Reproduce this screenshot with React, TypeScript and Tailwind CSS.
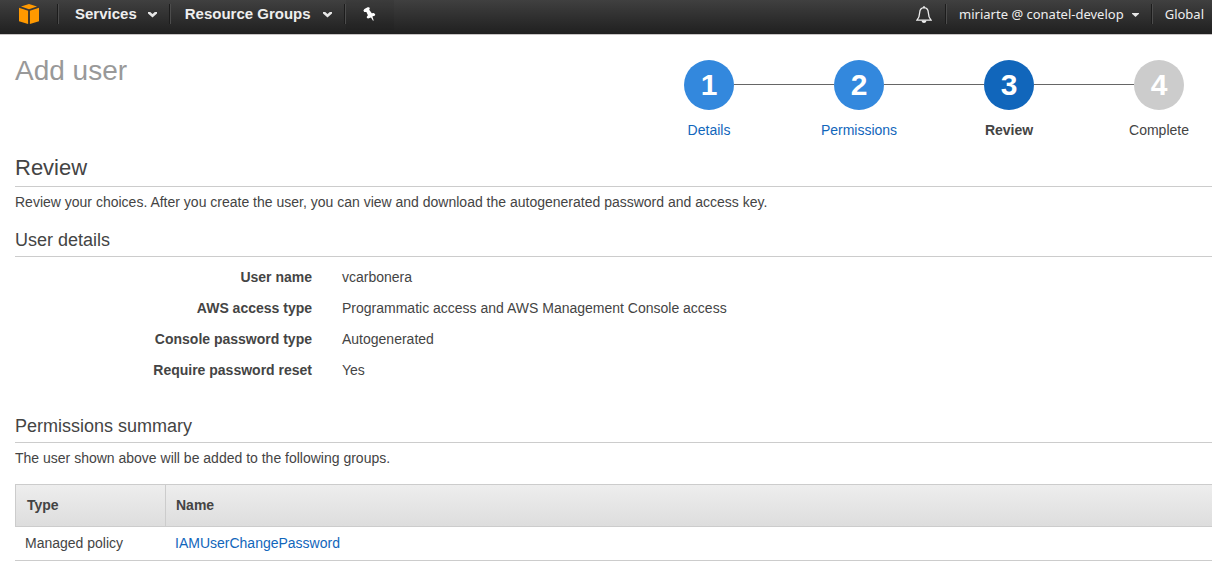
import React from "react";

type StepState = "done" | "current" | "upcoming";

const steps: { label: string; state: StepState }[] = [
  { label: "Details", state: "done" },
  { label: "Permissions", state: "done" },
  { label: "Review", state: "current" },
  { label: "Complete", state: "upcoming" },
];

const circleColor: Record<StepState, string> = {
  done: "bg-[#3388dd]",
  current: "bg-[#1166bb]",
  upcoming: "bg-[#cccccc]",
};

const details = [
  ["User name", "vcarbonera"],
  ["AWS access type", "Programmatic access and AWS Management Console access"],
  ["Console password type", "Autogenerated"],
  ["Require password reset", "Yes"],
];

const policies = [{ type: "Managed policy", name: "IAMUserChangePassword" }];

function Divider() {
  return <span className="mt-1 h-5 w-0.5 shrink-0 border-l border-r border-l-[#1c1c1c] border-r-[#4c4c4c]" />;
}

function CubeLogo() {
  return (
    <svg width="20" height="20" viewBox="0 0 20 20" fill="#ff9900" aria-hidden="true">
      <path d="M10 0 18 2.4 10 5.2 2 2.4Z" />
      <path d="M0 3.8 9.1 6.8V20L0 17.2Z" />
      <path d="M20 3.8 10.9 6.8V20L20 17.2Z" />
    </svg>
  );
}

function Chevron() {
  return (
    <svg width="9" height="6" viewBox="0 0 9 6" fill="#e6e6e6" aria-hidden="true">
      <path d="M0 0H2.2L4.5 2 6.8 0H9V1.6L4.5 5.4 0 1.6Z" />
    </svg>
  );
}

function Caret() {
  return (
    <svg width="7" height="4" viewBox="0 0 7 4" fill="#e6e6e6" aria-hidden="true">
      <path d="M0 0H7V0.8L3.5 4 0 0.8Z" />
    </svg>
  );
}

function Pin() {
  return (
    <svg width="13" height="14" viewBox="0 0 13 14" fill="#ffffff" aria-hidden="true">
      <path d="M0.4 3.4 1.4 2 4.6 0.2 6.2 0.2 6.8 1.4 6.2 2.8 8.8 6.2 10.8 6 12.2 7.2 12 8.4 9.4 9.6 10.7 13.4 10 13.8 8 10.4 5.2 11.6 3.9 11 3.8 9.8 4.9 8.2 3.4 5 1.2 4.9Z" />
    </svg>
  );
}

function Bell() {
  return (
    <svg width="16" height="18" viewBox="0 0 16 18" fill="none" stroke="#eeeeee" strokeWidth="1.3" aria-hidden="true">
      <path d="M8 1.6C5 1.8 3.8 4 3.7 6.6 3.6 10.8 2.8 12.2 0.9 14.2H15.1C13.2 12.2 12.4 10.8 12.3 6.6 12.2 4 11 1.8 8 1.6Z" />
      <path d="M8 0V2" />
      <path d="M5.6 14.6H10.4C10.2 16.4 9.2 17 8 17S5.8 16.4 5.6 14.6Z" fill="#eeeeee" stroke="none" />
    </svg>
  );
}

function TopBar() {
  return (
    <header className="flex h-[35px] items-start border-b border-[#c8c4c4] bg-linear-to-b from-[#404040] to-[#202020] text-[#eeeeee]">
      <nav className="flex text-[15px] font-bold leading-7" aria-label="Services">
        <a href="#home" aria-label="Console home" className="flex h-7 w-[57px] items-center pl-[19px]">
          <CubeLogo />
        </a>
        <Divider />
        <button type="button" className="flex h-7 items-center gap-[11px] pl-4 pr-3">
          Services
          <span className="pt-0.5">
            <Chevron />
          </span>
        </button>
        <Divider />
        <button type="button" className="flex h-7 items-center gap-3 pl-[14px] pr-3">
          Resource Groups
          <span className="pt-0.5">
            <Chevron />
          </span>
        </button>
        <Divider />
        <button type="button" aria-label="Pin shortcuts" className="flex h-[30px] w-12 items-center justify-center bg-black/5 pb-0.5">
          <Pin />
        </button>
      </nav>
      <nav className="ml-auto flex font-['Noto_Sans',sans-serif] text-[13px] leading-7" aria-label="Account">
        <button type="button" aria-label="Notifications" className="flex h-[30px] items-center pl-[15px] pr-[13px]">
          <Bell />
        </button>
        <Divider />
        <button type="button" className="flex h-7 items-center gap-2 px-3">
          miriarte @ conatel-develop
          <span className="pt-0.5">
            <Caret />
          </span>
        </button>
        <Divider />
        <button type="button" className="h-7 pl-3 pr-2">
          Global
        </button>
      </nav>
    </header>
  );
}

function Steps() {
  return (
    <ol className="flex pr-7 pt-[5px]">
      {steps.map((step, i) => (
        <React.Fragment key={step.label}>
          {i > 0 && <li aria-hidden="true" className="mt-6 h-px w-[100px] bg-[#666666]" />}
          <li className="flex w-[50px] flex-col items-center gap-[10px]">
            <span
              className={`flex size-[50px] items-center justify-center rounded-full text-[30px] font-bold leading-8 text-white ${circleColor[step.state]}`}
            >
              {i + 1}
            </span>
            {step.state === "done" ? (
              <a href={`#${step.label.toLowerCase()}`} className="whitespace-nowrap text-[#1166bb]">
                {step.label}
              </a>
            ) : (
              <span className={step.state === "current" ? "font-bold" : ""}>{step.label}</span>
            )}
          </li>
        </React.Fragment>
      ))}
    </ol>
  );
}

export default function App() {
  return (
    <div className="min-h-screen bg-white font-['Liberation_Sans',Arial,sans-serif] text-sm text-[#444444]">
      <TopBar />
      <main className="pl-[15px] pt-5">
        <div className="flex items-start justify-between">
          <h1 className="text-[28px] leading-8 text-[#999999]">Add user</h1>
          <Steps />
        </div>

        <h2 className="mt-[14px] border-b border-[#cccccc] pb-1 text-[22px] leading-7">Review</h2>
        <p className="mt-[5px]">
          Review your choices. After you create the user, you can view and download the autogenerated password and
          access key.
        </p>

        <section>
          <h3 className="mt-4 border-b border-[#cccccc] pb-1 text-lg leading-6">User details</h3>
          <dl className="mt-[10px] grid grid-cols-[297px_1fr] gap-x-[30px] gap-y-[11px]">
            {details.map(([label, value]) => (
              <React.Fragment key={label}>
                <dt className="text-right font-bold">{label}</dt>
                <dd>{value}</dd>
              </React.Fragment>
            ))}
          </dl>
        </section>

        <section>
          <h3 className="mt-[34px] border-b border-[#cccccc] pb-1 text-lg leading-6">Permissions summary</h3>
          <p className="mt-[5px]">The user shown above will be added to the following groups.</p>
          <table className="mt-4 w-full border-separate border-spacing-0 text-left">
            <thead>
              <tr className="bg-linear-to-b from-[#eeeeee] to-[#dddddd]">
                <th className="w-[151px] border border-[#cccccc] px-[11px] py-[10px] font-bold leading-[21px]">Type</th>
                <th className="border-b border-t border-[#cccccc] px-[10px] py-[10px] font-bold leading-[21px]">Name</th>
              </tr>
            </thead>
            <tbody>
              {policies.map((policy) => (
                <tr key={policy.name}>
                  <td className="border-b border-[#cccccc] px-[10px] pb-[7px] pt-[6px]">{policy.type}</td>
                  <td className="border-b border-[#cccccc] px-[9px] pb-[7px] pt-[6px]">
                    <a href="#policy" className="text-[#1166bb]">
                      {policy.name}
                    </a>
                  </td>
                </tr>
              ))}
            </tbody>
          </table>
        </section>
      </main>
    </div>
  );
}
